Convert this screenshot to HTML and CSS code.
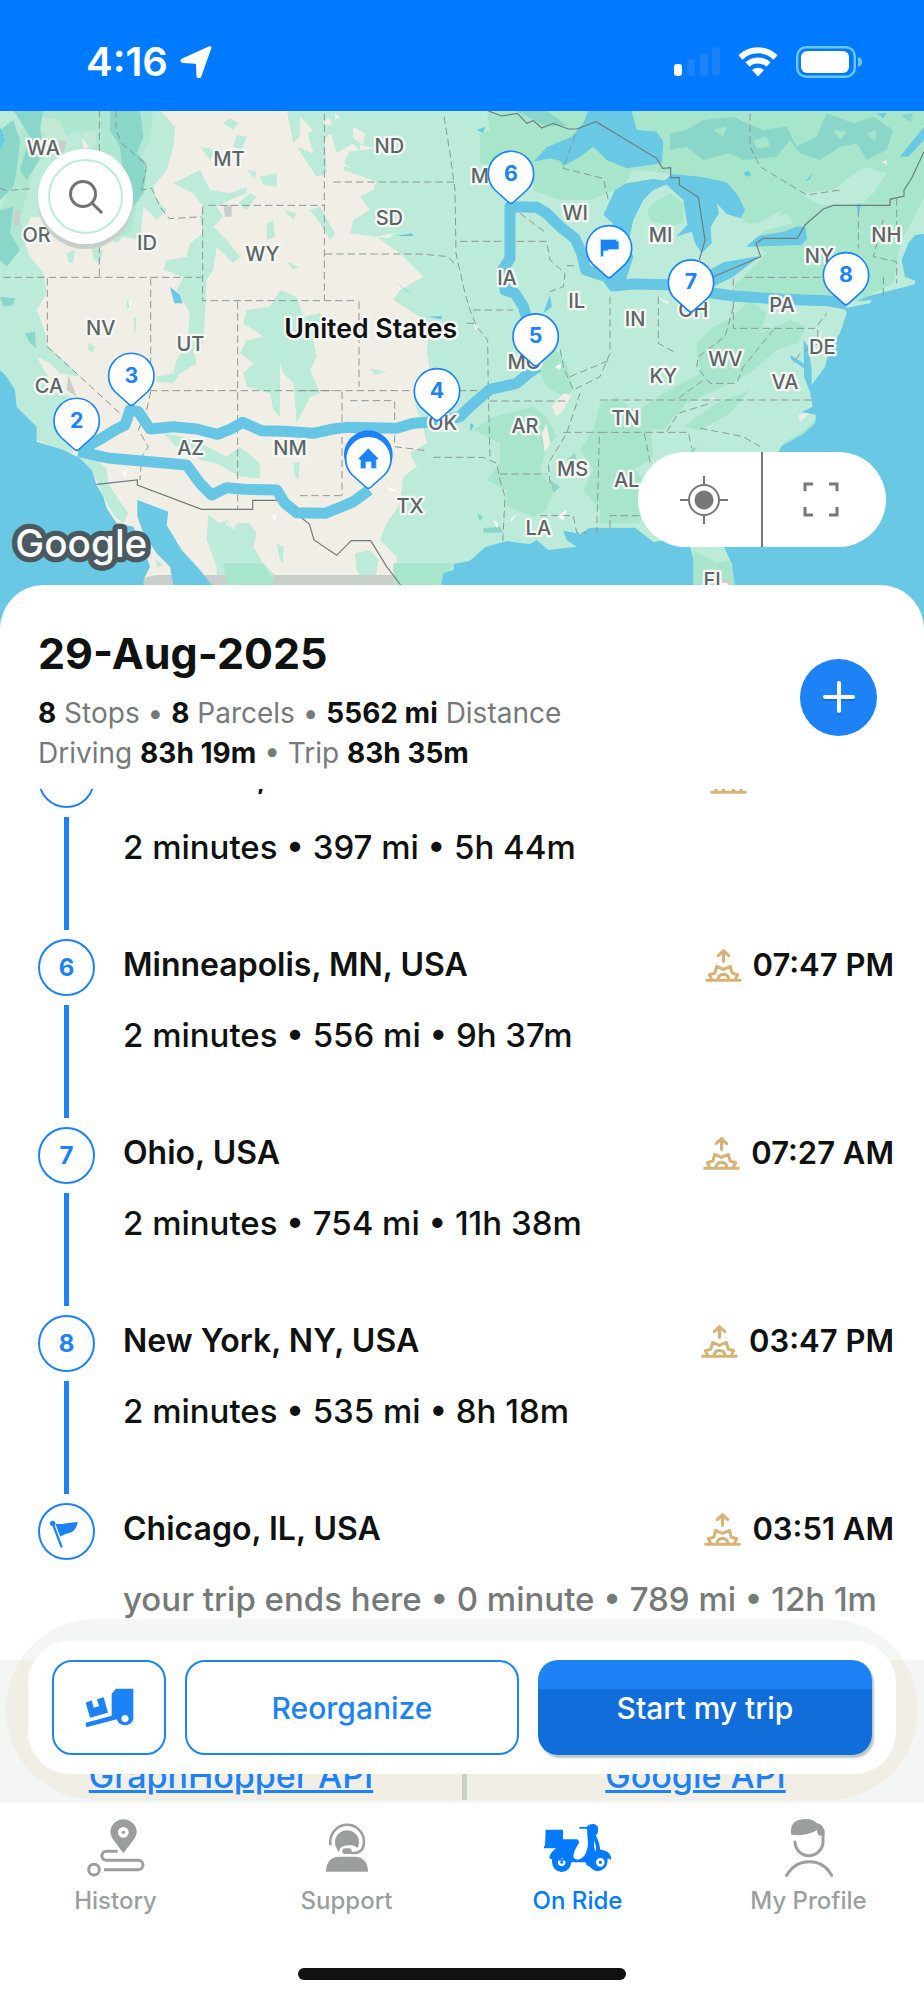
FILE: index.html
```html
<!DOCTYPE html>
<html lang="en">
<head>
<meta charset="utf-8">
<meta name="viewport" content="width=device-width, initial-scale=1">
<title>On Ride</title>
<link rel="stylesheet" href="styles.css">
</head>
<body>
<svg class="defs" aria-hidden="true">
  <symbol id="sun" viewBox="0 0 112 106">
    <g fill="none" stroke="#d7b276" stroke-width="9" stroke-linecap="round" stroke-linejoin="round">
      <path d="M56 41V9M40 23 56 8l16 15M5 98h102M19 92l-6-11 17-5 5-20 21 9 21-9 5 20 17 5-6 11M40 94c2-18 30-18 32 0"/>
    </g>
  </symbol>
  <symbol id="pin" viewBox="-80 -80 160 180" overflow="visible">
    <path d="M-8 84-48 48A68 68 0 1 1 48 48L8 84Q0 92-8 84Z" fill="#fff" stroke="#1c82f5" stroke-width="5"/>
  </symbol>
</svg>

<header class="status">
  <div class="status-time">
    <time>4:16</time>
    <svg width="32" height="32" viewBox="0 0 32 32" aria-hidden="true"><path d="M30 1.300 20 29.500c-.8 2-3 1.800-3.200-.3L16.200 17.500c0-1-.5-1.600-1.600-1.600L2.500 15.300C.3 15.100.1 13 2 12.100L28.500.3c1.300-.5 2.200 0 1.500 1z" transform="translate(.5 1)" fill="#fff" stroke="#fff" stroke-width="1.500"/></svg>
  </div>
  <div class="status-icons">
    <svg width="46" height="32" viewBox="0 0 46 32" aria-label="Signal"><rect x="0" y="18" width="8" height="12" rx="3" fill="#fff"/><g fill="#1c82f5"><rect x="13" y="13" width="8" height="17" rx="3"/><rect x="26" y="7" width="8" height="23" rx="3"/><rect x="38" y="1" width="8" height="29" rx="3"/></g></svg>
    <svg width="40" height="32" viewBox="0 0 40 32" aria-label="Wi-Fi"><g fill="none" stroke="#fff" stroke-width="6"><path d="M2.500 11.500a25 25 0 0 1 35 0"/><path d="M9.500 18.500a15.500 15.500 0 0 1 21 0"/></g><path d="M20 30.500l-6-6.500q6-4.500 12 0z" fill="#fff"/></svg>
    <svg width="67" height="32" viewBox="0 0 67 32" aria-label="Battery"><rect x="1.200" y="1.200" width="57.600" height="29.600" rx="9" fill="none" stroke="#69c8e4" stroke-width="2.400"/><rect x="5" y="5" width="48" height="22" rx="6" fill="#fff"/><path d="M62 11q4 1 4 5t-4 5z" fill="#69c8e4"/></svg>
  </div>
</header>

<main>
<section class="map" aria-label="Route map">
  <svg class="map-art" viewBox="0 3 2772 1560" preserveAspectRatio="xMidYMin slice" aria-hidden="true">
    <rect width="2772" height="1563" fill="#f1eee6"/>
    <!-- light vegetation -->
    <g fill="#bcebd9">
      <path d="M0 0H480L525 50 520 110 500 180 460 230 470 270 500 300 470 330 430 290 420 390 370 380 350 400 300 370 200 330 90 320 70 390 90 440 130 490 140 550 110 600 130 650 145 710 200 760 240 800 180 790 150 760 110 740 150 810 220 870 210 1000 220 1030 190 1025 110 990 110 950 50 890 45 840 0 780Z"/>
      <path d="M130 20 180 30 200 80 160 100 120 60Z" fill="#f1eee6"/>
      <path d="M245 70 290 60 285 110 250 115Z" fill="#f1eee6"/>
      <path d="M240 1045 290 1050 320 1075 325 1120 350 1160 385 1210 370 1240 345 1220 310 1160 290 1110Z"/>
      <path d="M600 180 630 240 690 250 740 230 740 250 690 270 650 290 670 320 640 350 680 390 720 440 700 460 650 410 640 480 620 510 610 700 580 720 590 760 540 790 520 820 470 815 470 800 520 790 530 750 560 700 570 610 530 540 550 500 490 480 500 450 560 440 570 400 610 370 600 330 610 290 580 250 520 220Z"/>
      <path d="M670 40 690 25 715 40 700 60ZM710 75 740 80 725 120 700 110ZM600 110 650 120 630 150ZM780 200 830 190 830 230 790 225ZM740 180 770 185 765 205ZM800 340 820 330 825 380 800 390ZM850 300 890 310 880 330ZM860 455 895 470 880 480ZM715 280 750 250 770 260 740 300ZM580 230 600 210 620 230 600 260Z"/>
      <path d="M860 0 880 100 920 60 940 130 890 110 950 200 980 190 975 90 990 60 1010 130 1060 100 1130 115 1040 125 1030 180 1130 215 1120 240 1080 260 1110 300 1060 330 1050 370 1130 380 1200 430 1270 500 1200 540 1180 570 1290 640 1280 720 1290 790 1240 850 1250 900 1270 950 1280 1000 1230 1030 1250 1070 1210 1100 1200 1180 1160 1240 1140 1290 1190 1340 1190 1570H2772V0Z"/>
      <path d="M960 90 1010 60 1080 120 1080 20 900 0 910 60Z"/>
      <path d="M740 600 810 590 840 540 890 560 910 620 960 610 990 650 940 690 950 740 930 780 960 850 930 860 890 940 880 820 850 790 840 760 840 920 820 900 810 850 740 830 730 790 760 760 720 730 740 690 790 680 730 640Z"/>
      <path d="M490 970 550 980 600 1000 680 1040 720 1010 780 1060 780 1105 720 1100 650 1060 600 1050 560 1020 530 1010ZM880 1060 900 1055 895 1110 885 1100Z"/>
      <path d="M625 1215 660 1240 680 1230 700 1260 710 1240 750 1240 770 1270 760 1310 790 1360 830 1400 830 1425 650 1425 650 1370 620 1290ZM830 1300 850 1310 850 1360 840 1350ZM380 570 400 575 380 600ZM265 700 285 710 280 730 265 720ZM400 625 410 620 405 680ZM200 430 225 420 220 460 205 455ZM275 410 310 420 300 460 280 450ZM40 770 90 780 130 860 110 850 80 810ZM1065 1330 1110 1320 1135 1350 1125 1420 1090 1410 1070 1380ZM930 300 960 290 1005 370 990 390 960 340ZM1110 775 1160 785 1125 795ZM468 1350 490 1365 470 1372ZM935 170 960 160 965 190 945 190Z"/>
    </g>
    <path d="M900 20 940 60 900 90ZM1060 50 1095 70 1090 105 1060 85ZM1020 130 1050 120 1030 160 1055 175 1015 165ZM950 215 1000 200 1020 230 960 240ZM1130 380 1180 370 1170 385ZM970 30 990 25 995 45 975 45ZM1005 10 1020 20 1005 30Z" fill="#f1eee6"/>
    <!-- forest -->
    <g fill="#a7e6cb">
      <path d="M130 0H460L450 90 420 150 390 220 410 300 390 370 350 380 330 320 280 130 230 60 150 110 100 180 60 330 80 400 20 440 0 400V300L40 200 60 60Z" opacity=".65"/>
      <path d="M1460 3H2772V260L2740 330 2700 400 2680 520 2600 560 2540 580 2200 545 2200 530 2300 430 2260 400 2350 300 2250 350 2200 300 2000 190 1900 180 1870 230 1820 250 1770 270 1680 270 1600 240 1600 180 1440 160 1410 140 1410 90 1470 60Z"/>
      <path d="M1650 700 1700 760 1720 840 1690 860 1640 830 1620 790ZM1480 920 1560 900 1600 890 1640 920 1670 980 1640 1010 1620 1080 1660 1140 1640 1200 1600 1220 1520 1190 1520 1140 1460 1110 1500 1060 1500 1000 1420 960ZM1780 960 1800 880 1850 860 1900 900 1950 920 1960 1040 1900 1080 1960 1190 1900 1230 1800 1200 1750 1140 1780 1080 1740 1020Z"/>
      <path d="M2090 700 2140 650 2200 620 2250 570 2300 610 2280 670 2370 630 2420 650 2390 700 2330 720 2250 790 2170 830 2060 880 1990 960 1840 950 1990 850 2100 790ZM2050 950 2150 880 2250 840 2190 910 2100 960ZM1800 1060 1880 1050 1940 1120 1920 1240 1800 1240ZM2350 1000 2400 970 2450 930 2420 980 2340 1025ZM2080 1320 2150 1360 2190 1350 2205 1425H2080ZM1180 1360H1360L1330 1425H1180ZM670 1360H790L830 1425H680Z"/>
      <path d="M1960 280 2010 250 2050 280 2050 340 2010 350 1950 330 1940 300ZM2650 600 2530 650 2500 700 2450 720Z"/>
    </g>
    <g fill="#bcebd9"><path d="M2400 250 2500 240 2550 200 2590 170 2660 190 2620 250 2590 280 2460 285ZM2280 340 2360 310 2380 340 2260 370 2200 390 2170 340 2240 340ZM1950 200 2000 205 1960 180ZM1410 170 1440 160 1440 0 1400 0Z"/></g>
    <!-- dense forest -->
    <g fill="#8ad6c8">
      <path d="M0 60 40 30 60 90 50 180 40 230 0 270ZM40 0H130L120 50 130 130 80 210 60 180 90 80ZM330 0H420L430 80 410 130 440 160 400 250 370 200 360 110 330 60ZM0 300 40 290 30 370 60 420 20 470 0 450ZM0 560 45 565 40 585 10 590ZM75 670 105 665 108 715 90 700ZM390 180 440 180 430 250 400 290Z"/>
      <path d="M2010 70 2060 60 2110 30 2200 20 2240 40 2290 60 2360 50 2390 110 2450 80 2480 10 2560 40 2620 20 2680 60 2660 120 2600 150 2570 100 2520 110 2460 150 2400 130 2370 90 2330 140 2230 150 2190 130 2110 150 2060 110 2010 120ZM1550 3 1640 3 1700 45 1640 50ZM2700 15 2740 10 2730 35Z"/>
      <path d="M1630 950 1640 970 1640 1030 1625 990ZM1430 1210 1450 1220 1440 1235ZM1450 1255 1500 1250 1510 1268 1450 1268ZM1650 1110 1680 1130 1660 1150ZM1700 1050 1725 1030 1730 1060ZM2070 1020 2090 1010 2080 1030Z"/>
    </g>
    <path d="M2140 60 2180 50 2170 80ZM2260 90 2300 80 2310 110 2270 115ZM2500 60 2540 65 2520 90ZM2600 70 2630 60 2625 95Z" fill="#a7e6cb"/>
    <!-- bare ground -->
    <path d="M45 300 60 300 55 350 40 345ZM670 285 695 285 695 320 675 320ZM180 90 200 95 190 130 170 120ZM205 795 230 860 200 840ZM400 1410 470 1395H680V1425H410ZM820 1395H1180V1425H820ZM2165 1408 2190 1408 2190 1425 2165 1425Z" fill="#c8cfca"/>
    <path d="M1655 890 1690 850 1715 855 1690 900 1670 920ZM1640 940 1650 1000 1635 1030 1625 970ZM1970 560 2010 575 2000 582ZM2395 915 2430 908 2400 935ZM2645 155 2660 150 2660 165ZM1110 505 1130 510 1125 525ZM2130 860 2150 865 2145 875ZM2450 690 2466 660 2460 700ZM1420 640 1440 655 1425 660Z" fill="#f1eee6"/>
    <path d="M385 575 400 570 390 590ZM817 1215 830 1212 825 1235ZM675 1235 690 1245 685 1250ZM1665 770 1685 760 1680 780ZM1160 1130 1190 1140 1170 1145ZM1480 1230 1495 1240 1490 1255ZM1550 1210 1535 1235 1530 1230ZM1670 1220 1700 1200 1690 1230ZM365 1085 380 1080 375 1103Z" fill="#fff"/>
    <!-- water -->
    <g fill="#69c8e4">
      <path d="M0 780 20 800 45 840 50 890 110 950 110 995 190 1020 240 1045 275 1080 290 1125 310 1160 320 1195 350 1240 400 1250 430 1310 450 1370 430 1410 440 1563H0Z"/>
      <path d="M412 1170 505 1205 500 1245 545 1320 600 1380 635 1425H520L510 1370 470 1330 430 1270 412 1220Z"/>
      <path d="M1324 1563V1420L1330 1390 1360 1380 1362 1362 1410 1352 1455 1312 1520 1293 1590 1303 1610 1290 1645 1320 1730 1310 1700 1290 1690 1262 1740 1272 1770 1253H1905L1960 1296 2010 1290 2070 1310 2080 1345V1563ZM2205 1563 2205 1430 2195 1360 2172 1310 2140 1250 2250 1080 2335 1025 2345 1008 2410 972 2445 940 2448 915 2405 905 2438 890 2430 845 2412 800 2411 690 2425 710 2435 780 2435 825 2475 770 2490 710 2520 670 2540 610 2535 595 2610 570 2530 590 2600 560 2745 523 2745 512 2715 500 2705 450 2725 400 2745 375 2772 372V1563Z"/>
      <path d="M1600 155 1640 112 1715 80 1750 40 1765 3H1895L1910 60 1970 65 1990 95 1985 160 1880 175 1820 150 1780 110 1740 140 1690 168 1680 152 1650 145Z"/>
      <path d="M1810 315 1845 240 1880 220 1960 207 2020 215 1960 240 1930 270 1900 330 1885 400 1900 440 1875 520 1830 520 1835 480 1838 340Z"/>
      <path d="M2015 192 2100 200 2180 217 2215 258 2235 300 2222 325 2180 312 2150 280 2157 310 2132 350 2135 400 2105 430 2085 400 2075 365 2028 380 2062 345 2050 270 1990 215Z"/>
      <path d="M2120 485 2170 457 2280 438 2200 500 2130 535 2070 530ZM2238 410 2275 378 2350 365 2390 350 2415 350 2422 385 2405 405ZM2700 140 2772 50V90L2725 140ZM2371 735 2410 760 2412 775 2375 750ZM510 530 540 555 548 580 523 580ZM0 50 15 90 0 120ZM1188 378 1235 370 1240 378ZM1188 515 1240 558 1215 540ZM1280 620 1325 618 1325 628ZM1630 610 1650 555 1655 590ZM1410 940 1422 945 1412 965ZM1430 60 1455 50 1450 70ZM2570 285 2583 280 2575 320ZM2230 188 2245 182 2255 195 2240 200ZM2415 215 2437 190 2430 208ZM2630 10 2660 10 2650 25Z"/>
    </g>
    <path d="M2535 595 2550 575 2615 570 2610 580Z" fill="#bcebd9"/>
    <!-- state lines -->
    <g fill="none" stroke="#8c9896" stroke-width="3" stroke-dasharray="22 12">
      <path d="M298 0V500M10 502H605M348 0V60L365 100 440 165 425 240 455 235 480 290 508 326 605 320M0 235 20 242 100 235M142 505V710L360 910M452 505V845L440 900 415 960 445 1010 425 1040 420 1110M450 842H1000M608 290V572H1075M625 286H972M973 10V570M713 575V1200M975 432H1265L1345 440 1370 470M1000 216H1365M1332 20 1350 130 1365 240 1368 430 1395 550 1410 600 1430 650 1463 690 1465 850 1470 1045M1380 394H1640L1650 450 1695 490 1690 530 1650 545M1560 310 1640 370M1077 575V830M900 842H1440M1026 845V1157M1050 872H1184V1010L1280 1022M900 1157H1026M1300 1042 1450 1042 1490 1060 1500 1110 1515 1160 1508 1300M1420 600H1540M1400 640H1425M1470 873H1710M1500 1092H1640M1650 1120 1645 1060 1700 970 1740 850M1620 1217H1720L1730 1268H1760M1800 967H2065L2075 1015M1690 967H1800M1830 560V730L1800 800 1720 840 1690 770 1680 715M1975 560V700L2030 730M1800 870H2435M1725 75 1690 175 1810 205 1825 270M1700 467H1730M1798 980 1790 1270M1830 1253V1217H1920M1933 970 1955 1080M2000 965 2035 910 2130 880M2200 505V655H2445L2480 610M2235 502H2580M2453 660 2455 700 2400 730 2380 760M2200 590 2175 680 2095 740 2090 770 2130 820 2210 820 2230 770 2320 660M2575 300V415M2690 265V350M2650 330 2620 440 2690 455V520M2650 500V560M2100 955 2180 970 2230 980 2280 1010M2250 10V110L2280 170 2420 255 2520 240M2035 865 2110 810M1710 800 1830 750"/>
    </g>
    <g fill="none" stroke="#6f7c7b" stroke-width="3.500">
      <path d="M290 1123 412 1110V1125L605 1198H758V1171H830L900 1220 928 1242 942 1290 1010 1336 1054 1292H1112L1160 1370 1202 1425M1465 3 1505 18 1553 10 1580 40 1600 32 1625 54 1660 40 1705 57H1730L1788 35 1970 145 1988 175 2012 173V203H2038V225L2095 262 2115 390 2098 450M2140 500 2282 440 2268 400 2290 385H2392L2415 345 2470 297 2500 286H2670V268L2712 258V240L2735 205 2772 125"/>
    </g>
    <!-- route -->
    <g fill="none" stroke="#66c6e4" stroke-width="33" stroke-linejoin="round">
      <path d="M235 1025 300 988 345 960 375 945 390 900 415 905 450 957 520 950 590 957 652 973 690 958 728 937 785 962 850 964 940 970 1000 957 1040 952 1190 955 1240 940 1311 935 1380 920 1410 890 1470 838 1550 820 1585 790 1615 770M1585 640 1570 590 1545 550 1515 540 1508 480 1530 445V290L1610 292 1640 310 1680 350 1725 385 1745 430 1757 480 1820 500 1840 528 1900 522 2000 524 2073 540 2200 558 2350 568 2480 572 2540 582"/>
      <path d="M235 1025 330 1045 450 1055 560 1065 600 1120 635 1155 680 1133 730 1138 830 1140 855 1180 890 1208 975 1210 1030 1188 1060 1175 1108 1140"/>
    </g>
    <g class="state">
      <text x="130" y="135">WA</text><text x="687" y="167">MT</text><text x="110" y="396">OR</text><text x="441" y="419">ID</text><text x="787" y="453">WY</text><text x="302" y="675">NV</text><text x="571" y="723">UT</text><text x="147" y="849">CA</text><text x="572" y="1034">AZ</text><text x="870" y="1034">NM</text><text x="1168" y="128">ND</text><text x="1168" y="346">SD</text><text x="1462" y="219">MN</text><text x="1726" y="329">WI</text><text x="1521" y="525">IA</text><text x="1730" y="594">IL</text><text x="1573" y="776">MO</text><text x="1328" y="960">OK</text><text x="1575" y="970">AR</text><text x="1877" y="945">TN</text><text x="1718" y="1099">MS</text><text x="1230" y="1210">TX</text><text x="1615" y="1274">LA</text><text x="1880" y="1132">AL</text><text x="1982" y="396">MI</text><text x="2080" y="621">OH</text><text x="1905" y="648">IN</text><text x="2346" y="605">PA</text><text x="2176" y="767">WV</text><text x="1990" y="818">KY</text><text x="2355" y="836">VA</text><text x="2467" y="731">DE</text><text x="2458" y="458">NY</text><text x="2659" y="396">NH</text><text x="2145" y="1432">FL</text>
    </g>
    <text class="country" x="1112" y="685">United States</text>
    <text class="brand" x="46" y="1342">Google</text>
    <g class="pins">
      <use href="#pin" x="-80" y="-80" width="160" height="180" transform="translate(230 933)"/><text x="230" y="953">2</text>
      <use href="#pin" x="-80" y="-80" width="160" height="180" transform="translate(394 798)"/><text x="394" y="818">3</text>
      <use href="#pin" x="-80" y="-80" width="160" height="180" transform="translate(1311 844)"/><text x="1311" y="864">4</text>
      <use href="#pin" x="-80" y="-80" width="160" height="180" transform="translate(1607 680)"/><text x="1607" y="700">5</text>
      <use href="#pin" x="-80" y="-80" width="160" height="180" transform="translate(1533 192)"/><text x="1533" y="212">6</text>
      <use href="#pin" x="-80" y="-80" width="160" height="180" transform="translate(2073 518)"/><text x="2073" y="538">7</text>
      <use href="#pin" x="-80" y="-80" width="160" height="180" transform="translate(2538 496)"/><text x="2538" y="516">8</text>
      <use href="#pin" x="-80" y="-80" width="160" height="180" transform="translate(1827 415)"/>
      <path d="M1801 440V388H1850V393H1857V419H1825V423H1811V440Z" fill="#1c82f5" stroke="#bcebd9" stroke-width="3"/>
      <circle cx="1105" cy="1034" r="73" fill="#1c82f5"/>
      <use href="#pin" x="-80" y="-80" width="160" height="180" transform="translate(1105 1047)"/>
      <path d="M1074 1046 1105 1014 1136 1046 1129 1050V1076H1113V1056H1098V1076H1081V1050Z" fill="#1c82f5" stroke="#bcebd9" stroke-width="3"/>
    </g>
  </svg>
  <button class="search" type="button" aria-label="Search">
    <svg width="36" height="36" viewBox="0 0 36 36" aria-hidden="true"><g fill="none" stroke="#707574" stroke-width="3"><circle cx="15" cy="15" r="12.500"/><path d="M24 24l10 10"/></g></svg>
  </button>
  <div class="map-tools">
    <button type="button" aria-label="My location"><svg width="48" height="48" viewBox="0 0 48 48" aria-hidden="true"><g fill="none" stroke="#757a79" stroke-width="2"><circle cx="24" cy="24" r="15"/><path d="M24 0v9M24 39v9M0 24h9M39 24h9"/></g><circle cx="24" cy="24" r="9.500" fill="#757a79"/></svg></button>
    <button type="button" aria-label="Full screen"><svg width="36" height="36" viewBox="0 0 36 36" aria-hidden="true"><path d="M2 9V2h8M26 2h8v7M34 25v8h-8M10 33H2v-8" fill="none" stroke="#757a79" stroke-width="3"/></svg></button>
  </div>
</section>

<section class="sheet">
  <div class="summary">
    <div>
      <h1>29-Aug-2025</h1>
      <p><b>8</b> Stops • <b>8</b> Parcels • <b>5562 mi</b> Distance</p>
      <p>Driving <b>83h 19m</b> • Trip <b>83h 35m</b></p>
    </div>
    <button class="add" type="button" aria-label="Add stop"><svg width="34" height="36" viewBox="0 0 34 36" aria-hidden="true"><path d="M3 19h28M17 5v28" stroke="#116dd9" stroke-width="4" stroke-linecap="round"/><path d="M3 17h28M17 3v28" stroke="#fff" stroke-width="4" stroke-linecap="round"/></svg></button>
  </div>

  <div class="stops">
    <ol>
      <li><div class="rail"><span class="dot">5</span></div><div class="stop"><div class="stop-top"><h2>Missouri, USA</h2><time><svg><use href="#sun"/></svg>10:10 AM</time></div><p>2 minutes • 397 mi • 5h 44m</p></div></li>
      <li><div class="rail"><span class="dot">6</span></div><div class="stop"><div class="stop-top"><h2>Minneapolis, MN, USA</h2><time><svg><use href="#sun"/></svg>07:47 PM</time></div><p>2 minutes • 556 mi • 9h 37m</p></div></li>
      <li><div class="rail"><span class="dot">7</span></div><div class="stop"><div class="stop-top"><h2>Ohio, USA</h2><time><svg><use href="#sun"/></svg>07:27 AM</time></div><p>2 minutes • 754 mi • 11h 38m</p></div></li>
      <li><div class="rail"><span class="dot">8</span></div><div class="stop"><div class="stop-top"><h2>New York, NY, USA</h2><time><svg><use href="#sun"/></svg>03:47 PM</time></div><p>2 minutes • 535 mi • 8h 18m</p></div></li>
      <li class="end"><div class="rail"><span class="dot"><svg width="30" height="30" viewBox="153 168 90 90" overflow="visible" aria-label="End"><path d="M155 187l27 72" stroke="#1c82f5" stroke-width="7"/><circle cx="155" cy="187" r="8" fill="#1c82f5"/><path d="M163 188q18 2 35-1t32-4q-2 16-10 24-6 7-16 9-15 3-26 11z" fill="#1c82f5"/></svg></span></div><div class="stop"><div class="stop-top"><h2>Chicago, IL, USA</h2><time><svg><use href="#sun"/></svg>03:51 AM</time></div><p>your trip ends here • 0 minute • 789 mi • 12h 1m</p></div></li>
    </ol>
  </div>
</section>

<section class="dock">
  <div class="halo">
    <div class="actions">
      <button class="load" type="button" aria-label="Loading order"><svg width="49" height="40" viewBox="254 683 147 120" aria-hidden="true"><g fill="#1c82f5"><path fill-rule="evenodd" d="M347 685h52v92a26 24 0 0 1-50 0l-90 24q-4-6-3-14l78-21v-66zM374 764a11 11 0 1 0 .1 0z"/><path d="M256 727l18-7 6 22 16-4-6-21 20-6 13 46-54 15z"/></g></svg></button>
      <button class="ghost" type="button">Reorganize</button>
      <button class="primary" type="button">Start my trip</button>
    </div>
    <div class="credits"><a href="#graphhopper">GraphHopper API</a><a href="#google">Google API</a></div>
  </div>
</section>
</main>

<nav class="tabs">
  <a href="#history"><svg width="58" height="58" viewBox="262 85 174 174" aria-hidden="true"><g fill="#9a9f9e"><path fill-rule="evenodd" d="M371 188l-32-44q-7-10-7-19a39 39 0 0 1 79 0q0 9-7 19zM371 109a16 16 0 1 0 .1 0z"/><circle cx="371" cy="125" r="5"/></g><g fill="none" stroke="#9a9f9e" stroke-width="9"><path d="M354 182h-34a13.500 13.500 0 0 0 0 27h96a14 14 0 0 1 0 28H313"/><circle cx="283" cy="237" r="16"/></g></svg><span>History</span></a>
  <a href="#support"><svg width="58" height="58" viewBox="951 85 174 174" aria-hidden="true"><path d="M975 243v-5q4-38 38-40h50q34 2 38 40v5z" fill="#9a9f9e"/><path d="M1014 184q-12-14-12-29a36 36 0 0 1 72 0q0 11-5 17-8-9-20-8-25-1-31 9z" fill="#9a9f9e"/><path d="M988 164v-11a50 50 0 0 1 101 0q-1 32-28 34h-12" fill="none" stroke="#9a9f9e" stroke-width="7.500"/><rect x="1024" y="173" width="28" height="17" rx="8" fill="#9a9f9e"/></svg><span>Support</span></a>
  <a class="active" href="#ride"><svg width="67" height="58" viewBox="245 85 201 174" aria-hidden="true"><g fill="#007bff"><path d="M250 117h52v29h40q7 0 8 9 0 6-7 13-9 13-10 28 0 9 14 11 12-1 22-16 7-14 8-30l-3-46q-4-1-5-1h-18v-5h22q6-9 18-9 15 1 16 12v12q-1 8-7 10 3 6 7 14 5 12 7 29 28 2 32 22v9q-4-3-10-5 0 24-10 30-23 20-45-6-9 0-11-12h-43q-3 28-30 29-26-3-28-29v-9q-5 0-8-5 1-13 20-28h-36v-7h3z"/></g><path d="M395 149q8 17 6 34-7-5-6-34z" fill="#fff"/><circle cx="298" cy="215" r="8" fill="none" stroke="#fff" stroke-width="7"/><path d="M284 205h28v5h-28z" fill="#007bff"/><circle cx="414" cy="215" r="9" fill="none" stroke="#fff" stroke-width="8"/></svg><span>On Ride</span></a>
  <a href="#profile"><svg width="58" height="58" viewBox="950 85 174 174" aria-hidden="true"><path d="M984 132q-8-40 32-46 30-4 44 11 25 5 24 34l-16 5-6-10-1-8q-30 20-77 14z" fill="#9a9f9e"/><g fill="none" stroke="#9a9f9e" stroke-width="9" stroke-linecap="round"><path d="M1079 126v26a41 41 0 0 1-84 2M970 254q24-41 68-41t67 41"/></g></svg><span>My Profile</span></a>
</nav>
<div class="home-bar"></div>
</body>
</html>
```
FILE: styles.css
```css
* { box-sizing: border-box; }
body {
  margin: 0;
  background: #fff;
  color: #101111;
  font-family: Inter, "Liberation Sans", sans-serif;
}
h1, h2, p, ol { margin: 0; padding: 0; }
button { font: inherit; border: 0; padding: 0; cursor: pointer; }
svg { display: block; flex: none; }
.defs { position: absolute; width: 0; height: 0; }

.status {
  height: 111px;
  padding: 12px 61px 0 86px;
  background: #007bff;
  color: #fff;
  display: flex;
  align-items: center;
  justify-content: space-between;
}
.status-time { display: flex; align-items: center; gap: 12px; font-size: 40px; font-weight: 600; line-height: 48px; }
.status-icons { display: flex; align-items: center; gap: 18px; }

.map { position: relative; height: 520px; background: #69c8e4; }
.map-art { width: 100%; height: 100%; }
.state text {
  font-size: 60px;
  font-weight: 500;
  text-anchor: middle;
  fill: #5b6667;
  stroke: #f7f7f4;
  stroke-width: 14px;
  stroke-linejoin: round;
  paint-order: stroke;
}
.country {
  font-size: 80px;
  font-weight: 600;
  text-anchor: middle;
  fill: #101111;
  stroke: #f7f7f4;
  stroke-width: 14px;
  stroke-linejoin: round;
  paint-order: stroke;
}
.brand {
  font-size: 116px;
  font-weight: 500;
  fill: #fff;
  stroke: #4a5a60;
  stroke-width: 32px;
  stroke-linejoin: round;
  paint-order: stroke;
}
.pins text { font-size: 64px; font-weight: 700; text-anchor: middle; fill: #1c82f5; }

.search {
  position: absolute;
  left: 38px;
  top: 38px;
  width: 95px;
  height: 95px;
  border-radius: 50%;
  background: #fff;
  box-shadow: 0 5px 1px #c8cfca;
  display: grid;
  place-items: center;
}
.search::before {
  content: "";
  position: absolute;
  inset: 10px;
  border: 2px solid #bcebd9;
  border-radius: 50%;
}
.map-tools {
  position: absolute;
  right: 38px;
  top: 341px;
  height: 95px;
  width: 248px;
  display: flex;
  border-radius: 48px;
  background: #fff;
  overflow: hidden;
}
.map-tools button { flex: 1; background: none; display: grid; place-items: center; padding-left: 8px; }
.map-tools button + button { border-left: 2px solid #757a79; padding: 0 8px 0 0; }

.sheet { position: relative; margin-top: -46px; background: #fff; border-radius: 44px 44px 0 0; }
.summary { height: 204px; padding: 42px 47px 0 38px; display: flex; justify-content: space-between; }
.summary h1 { font-size: 43px; font-weight: 700; line-height: 52px; margin-bottom: 14px; }
.summary p { font-size: 28px; line-height: 40px; color: #757a79; white-space: nowrap; }
.summary b { color: #101111; font-weight: 700; }
.add {
  width: 77px;
  height: 77px;
  margin-top: 32px;
  border-radius: 50%;
  background: #1c82f5;
  display: grid;
  place-items: center;
}

.stops { overflow: hidden; }
.stops ol { list-style: none; margin-top: -38px; }
.stops li { min-height: 188px; padding: 0 30px 0 38px; display: flex; gap: 28px; }
.stops li.end { min-height: 116px; }
.rail { width: 57px; display: flex; flex-direction: column; align-items: center; gap: 9px; }
.rail::after { content: ""; width: 5px; flex: 1; margin-bottom: 9px; background: #1c82f5; }
.end .rail::after { display: none; }
.dot {
  width: 57px;
  height: 57px;
  border: 2px solid #1c82f5;
  border-radius: 50%;
  display: grid;
  place-items: center;
  color: #1c82f5;
  font-size: 24px;
  font-weight: 700;
}
.stop { flex: 1; padding-top: 6px; }
.stop-top { display: flex; justify-content: space-between; align-items: center; margin-bottom: 30px; }
.stop h2, .stop time { font-size: 32px; font-weight: 600; line-height: 40px; }
.stop time { display: flex; align-items: center; gap: 11px; font-size: 31px; }
.stop time svg { width: 37px; height: 35px; }
.stop p { font-size: 33px; font-weight: 500; line-height: 40px; white-space: nowrap; }
.end p { color: #757a79; }

.dock { position: relative; height: 184px; background: linear-gradient(#fff 41px, #f4f6f5 41px); }
.halo {
  height: 181px;
  margin: 0 6px;
  padding: 22px 22px 0;
  border-radius: 90px;
  background: linear-gradient(#f4f6f5 41px, #f1eee6 41px);
}
.actions {
  position: relative;
  z-index: 1;
  padding: 19px 24px;
  border-radius: 42px;
  background: #fff;
  display: grid;
  grid-template-columns: 114px 1fr 1fr;
  gap: 19px;
}
.actions button { height: 95px; border-radius: 20px; font-size: 30px; font-weight: 500; }
.actions .load, .actions .ghost { background: #fff; border: 2px solid #1c82f5; color: #1c82f5; }
.load { display: grid; place-items: center; }
.primary {
  background: linear-gradient(#1c82f5 29px, #116dd9 29px);
  color: #fff;
  box-shadow: 2px 3px 2px #bcc8c4;
}
.credits { margin: -22px -28px 0; display: grid; grid-template-columns: 1fr 1fr; text-align: center; }
.credits a {
  font-size: 34px;
  font-weight: 500;
  line-height: 48px;
  color: #1c82f5;
  text-decoration-thickness: 3px;
}
.credits a + a { border-left: 5px solid #c8cfca; }

.tabs { height: 152px; padding-top: 16px; display: grid; grid-template-columns: repeat(4, 1fr); background: #fff; }
.tabs a {
  display: flex;
  flex-direction: column;
  align-items: center;
  gap: 8px;
  color: #9a9f9e;
  font-size: 24px;
  font-weight: 500;
  line-height: 32px;
  text-decoration: none;
}
.tabs .active { color: #007bff; }
.home-bar { width: 328px; height: 12px; margin: 13px auto 19px; border-radius: 6px; background: #101111; }
```
